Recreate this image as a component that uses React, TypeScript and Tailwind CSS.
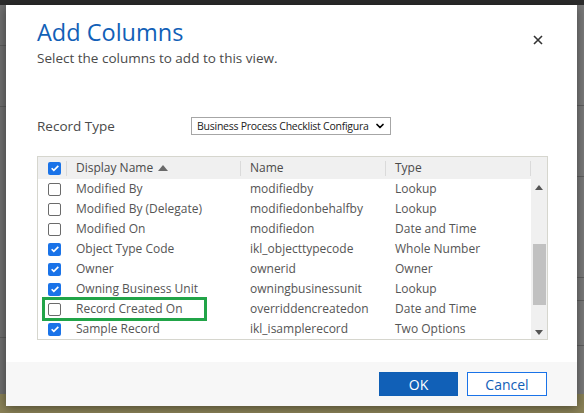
import { ChevronDown } from "lucide-react"

type Row = {
  display: string
  name: string
  type: string
  checked: boolean
}

const ROWS: Row[] = [
  { display: "Modified By", name: "modifiedby", type: "Lookup", checked: false },
  { display: "Modified By (Delegate)", name: "modifiedonbehalfby", type: "Lookup", checked: false },
  { display: "Modified On", name: "modifiedon", type: "Date and Time", checked: false },
  { display: "Object Type Code", name: "ikl_objecttypecode", type: "Whole Number", checked: true },
  { display: "Owner", name: "ownerid", type: "Owner", checked: true },
  { display: "Owning Business Unit", name: "owningbusinessunit", type: "Lookup", checked: true },
  { display: "Record Created On", name: "overriddencreatedon", type: "Date and Time", checked: false },
  { display: "Sample Record", name: "ikl_isamplerecord", type: "Two Options", checked: true },
]

function Checkbox({ checked }: { checked: boolean }) {
  if (checked) {
    return (
      <span className="flex h-[13px] w-[13px] items-center justify-center rounded-[2px] bg-[#1a73e8]">
        <svg viewBox="0 0 12 12" className="h-[10px] w-[10px]">
          <path d="M2 6.3l2.6 2.6L10 3.4" fill="none" stroke="white" strokeWidth="2" />
        </svg>
      </span>
    )
  }
  return <span className="block h-[13px] w-[13px] rounded-[2px] border border-[#6b6b6b] bg-white" />
}

function Separator() {
  return <span className="h-[15px] w-px bg-[#dadada]" />
}

export default function App() {
  return (
    <div className="relative h-[413px] w-[584px] overflow-hidden font-['Segoe_UI','Open_Sans',sans-serif]">
      {/* page behind the modal */}
      <div className="flex h-full flex-col">
        <div className="h-[5px] bg-[#2b2b2b]" />
        <div className="flex flex-1 justify-between bg-[#6f6f6f]">
          <div className="flex w-[6px] flex-col">
            <span className="mt-[40px] h-px bg-[#5c5c5c]" />
            <span className="mt-[60px] h-px bg-[#5c5c5c]" />
            <span className="mt-[230px] h-px bg-[#5c5c5c]" />
          </div>
          <div className="flex w-[7px] flex-col bg-[#7a7a7a]">
            <span className="mt-[100px] h-px bg-[#5f5f5f]" />
            <span className="mt-[70px] h-px bg-[#5f5f5f]" />
            <span className="mt-[100px] h-px bg-[#5f5f5f]" />
            <span className="mt-[22px] h-px bg-[#5f5f5f]" />
            <span className="mt-[44px] h-px bg-[#5f5f5f]" />
          </div>
        </div>
        <div className="h-[19px] bg-[#8a8257]" />
      </div>

      {/* modal */}
      <div className="absolute left-[6px] top-[5px] flex h-[401px] w-[571px] flex-col bg-white shadow-[0_2px_10px_rgba(0,0,0,0.45)]">
        <div className="flex items-start justify-between pl-[31px] pr-[34px] pt-[11px]">
          <div>
            <h1 className="text-[23.5px] leading-[32px] text-[#1160b7]">Add Columns</h1>
            <p className="mt-[1px] text-[13.5px] leading-[18px] text-[#4a4a4a]">
              Select the columns to add to this view.
            </p>
          </div>
          <svg viewBox="0 0 10 10" className="mt-[19px] h-[10px] w-[10px]">
            <path d="M1 1l8 8M9 1l-8 8" stroke="#333" strokeWidth="1.6" />
          </svg>
        </div>

        <div className="mt-[49px] flex items-center pl-[31px]">
          <span className="w-[154px] text-[13.5px] text-[#4a4a4a]">Record Type</span>
          <div className="flex h-[18px] w-[200px] items-center border border-[#a6a6a6] pl-[5px] pr-[4px]">
            <span className="flex-1 whitespace-nowrap text-[10.5px] leading-none tracking-[-0.25px] text-[#222]">
              Business Process Checklist Configura
            </span>
            <ChevronDown className="ml-[1px] h-[12px] w-[12px] shrink-0 text-black" strokeWidth={3.5} />
          </div>
        </div>

        {/* grid */}
        <div className="relative ml-[31px] mt-[20px] w-[511px] border border-[#d6d6ce] text-[12px]">
          <div className="flex h-[22px] items-center bg-[#f0f0f0] text-[#4a4a4a]">
            <div className="flex w-[28px] items-center pl-[10px]">
              <Checkbox checked />
            </div>
            <Separator />
            <div className="flex w-[173px] items-center pl-[9px]">
              Display Name
              <svg viewBox="0 0 10 6" className="ml-[5px] h-[6px] w-[10px]">
                <path d="M0 6L5 0l5 6z" fill="#6a6a6a" />
              </svg>
            </div>
            <Separator />
            <div className="w-[144px] pl-[9px]">Name</div>
            <Separator />
            <div className="w-[144px] pl-[9px]">Type</div>
            <Separator />
          </div>

          <div className="flex">
            <div className="flex-1">
              {ROWS.map((r) => (
                <div key={r.name} className="flex h-[20px] items-center text-[#555]">
                  <div className="flex w-[29px] items-center pl-[10px]">
                    <Checkbox checked={r.checked} />
                  </div>
                  <div className="w-[174px] whitespace-nowrap pl-[9px]">{r.display}</div>
                  <div className="w-[145px] whitespace-nowrap pl-[9px]">{r.name}</div>
                  <div className="whitespace-nowrap pl-[9px]">{r.type}</div>
                </div>
              ))}
            </div>
            <div className="flex w-[16px] flex-col items-center bg-[#f0f0f0] pb-[4px] pt-[6px]">
              <svg viewBox="0 0 8 5" className="h-[5px] w-[8px]">
                <path d="M0 5L4 0l4 5z" fill="#555" />
              </svg>
              <div className="mt-[54px] h-[61px] w-[13px] bg-[#c1c1c1]" />
              <div className="flex-1" />
              <svg viewBox="0 0 8 5" className="h-[5px] w-[8px]">
                <path d="M0 0l4 5 4-5z" fill="#555" />
              </svg>
            </div>
          </div>

          {/* highlight annotation */}
          <div className="absolute left-[4px] top-[140px] h-[24px] w-[165px] border-[3px] border-[#21a448]" />
        </div>

        <div className="mt-auto flex h-[44px] items-center justify-end gap-[9px] bg-[#f7f7f7] pr-[30px]">
          <button className="h-[24px] w-[79px] border border-[#0f5fb5] bg-[#1160b7] text-[14px] text-white">
            OK
          </button>
          <button className="h-[24px] w-[80px] border border-[#1a73e8] bg-white text-[14px] text-[#1160b7]">
            Cancel
          </button>
        </div>
      </div>
    </div>
  )
}
